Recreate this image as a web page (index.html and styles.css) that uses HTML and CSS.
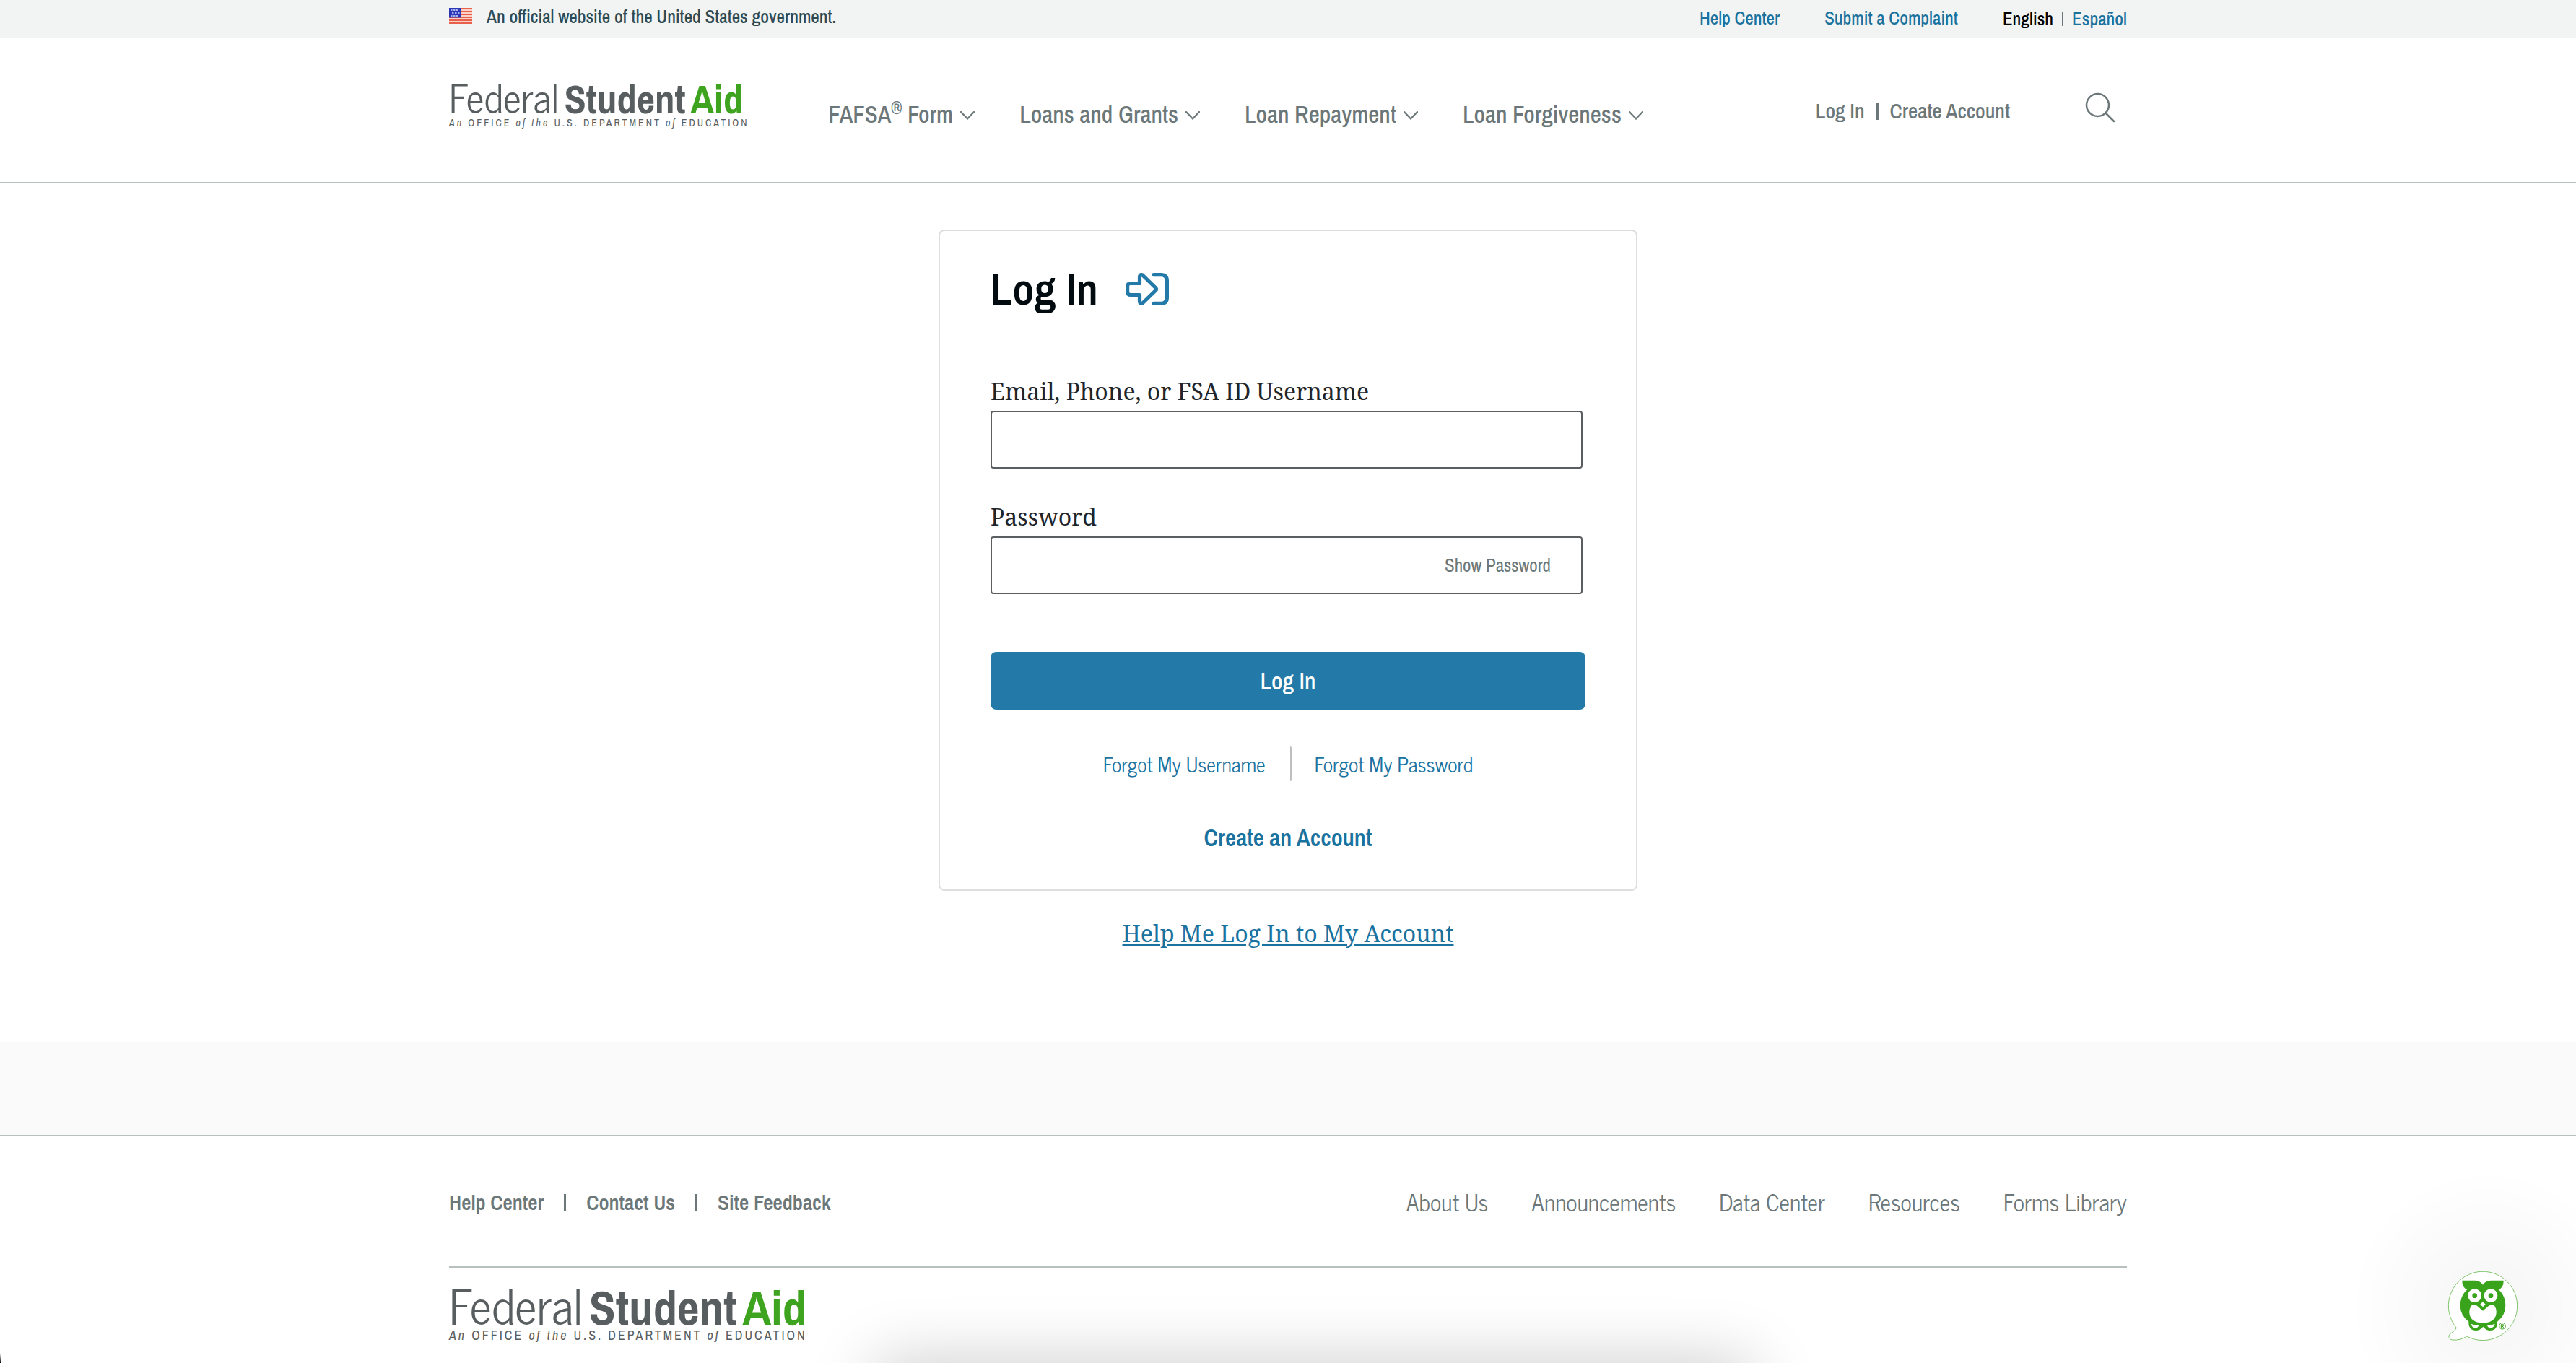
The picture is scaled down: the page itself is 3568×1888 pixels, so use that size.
FILE: index.html
```html
<!DOCTYPE html>
<html lang="en">
<head>
<meta charset="utf-8">
<meta name="viewport" content="width=device-width, initial-scale=1">
<title>Log In | Federal Student Aid</title>
<link rel="stylesheet" href="styles.css">
</head>
<body>
<svg class="sprite" aria-hidden="true">
  <symbol id="chevron" viewBox="0 0 20 12"><path d="M1 1 L10 10.500 L19 1" fill="none" stroke="currentColor" stroke-width="2.200" stroke-linecap="round"/></symbol>
</svg>

<div class="topbar">
  <div class="container topbar-row">
    <div class="official">
      <svg class="flag" viewBox="0 0 32 22" aria-hidden="true">
        <rect width="32" height="22" fill="#fbd0c6"/>
        <path d="M0 1H32M0 5H32M0 9H32M0 13H32M0 17H32M0 21H32" stroke="#e9604a" stroke-width="2"/>
        <rect width="16" height="13.500" fill="#2a38b8"/>
        <path d="M2 3H14M4 7H15M2 11H14" stroke="#a9b2ee" stroke-width="2" stroke-dasharray="2.500 1.500"/>
      </svg>
      <span>An official website of the United States government.</span>
    </div>
    <nav class="utility" aria-label="Utility">
      <a href="#">Help Center</a>
      <a href="#">Submit a Complaint</a>
      <div class="language"><span class="current">English</span><i class="bar"></i><a href="#">Español</a></div>
    </nav>
  </div>
</div>

<header class="header">
  <div class="container header-row">
    <a class="logo" href="#">
      <span class="wordmark"><span class="light">Federal</span><b>Student</b><b class="aid">Aid</b></span>
      <span class="tagline"><em>An</em> OFFICE <em>of the</em> U.S. DEPARTMENT <em>of</em> EDUCATION</span>
    </a>
    <nav class="main-nav" aria-label="Main">
      <button type="button"><span>FAFSA<sup>®</sup> Form</span><svg class="chevron"><use href="#chevron"/></svg></button>
      <button type="button"><span>Loans and Grants</span><svg class="chevron"><use href="#chevron"/></svg></button>
      <button type="button"><span>Loan Repayment</span><svg class="chevron"><use href="#chevron"/></svg></button>
      <button type="button"><span>Loan Forgiveness</span><svg class="chevron"><use href="#chevron"/></svg></button>
    </nav>
    <div class="account"><a href="#">Log In</a><i class="bar"></i><a href="#">Create Account</a></div>
    <button type="button" class="search" aria-label="Search">
      <svg viewBox="0 0 42 42" aria-hidden="true"><g fill="none" stroke="#6b7778" stroke-width="2.500" stroke-linecap="round"><circle cx="17.500" cy="17.500" r="15.500"/><path d="M28.500 28.500L40 40"/></g></svg>
    </button>
  </div>
</header>

<main class="main">
  <form class="card">
    <h1>Log In
      <svg class="login-icon" viewBox="0 0 60 45" aria-hidden="true"><g fill="none" stroke="#237aa8" stroke-width="5.200" stroke-linejoin="round"><path d="M19.500 14.500H7Q2.600 14.500 2.600 18.500V26.500Q2.600 30.500 7 30.500H19.500V40Q20 43.500 23.500 42L41.500 24.500Q43.500 22.500 41.500 20.500L23.500 3Q20 1.500 19.500 5Z"/><path d="M39 2.600H49Q57.400 2.600 57.400 11V34Q57.400 42.400 49 42.400H39" stroke-linecap="round"/></g></svg>
    </h1>
    <label for="username">Email, Phone, or FSA ID Username</label>
    <input id="username" type="text">
    <label for="password">Password</label>
    <div class="password-box">
      <input id="password" type="password">
      <button type="button">Show Password</button>
    </div>
    <button type="submit" class="submit">Log In</button>
    <div class="forgot"><a href="#">Forgot My Username</a><i class="divider"></i><a href="#">Forgot My Password</a></div>
    <a class="create" href="#">Create an Account</a>
  </form>
  <a class="help" href="#">Help Me Log In to My Account</a>
</main>

<div class="band"></div>

<footer class="footer">
  <div class="container">
    <div class="footer-row">
      <nav class="footer-left" aria-label="Support"><a href="#">Help Center</a><i class="bar"></i><a href="#">Contact Us</a><i class="bar"></i><a href="#">Site Feedback</a></nav>
      <nav class="footer-right" aria-label="Site"><a href="#">About Us</a><a href="#">Announcements</a><a href="#">Data Center</a><a href="#">Resources</a><a href="#">Forms Library</a></nav>
    </div>
    <a class="logo logo-large" href="#">
      <span class="wordmark"><span class="light">Federal</span><b>Student</b><b class="aid">Aid</b></span>
      <span class="tagline"><em>An</em> OFFICE <em>of the</em> U.S. DEPARTMENT <em>of</em> EDUCATION</span>
    </a>
  </div>
</footer>

<div class="overlays">
  <div class="bottom-shadow"></div>
  <div class="corner"></div>
  <div class="glow"></div>
  <button type="button" class="chat" aria-label="Ask Aidan">
    <svg viewBox="150 118 300 300" aria-hidden="true">
      <path d="M187 359A143 143 0 1 1 230 394Q205 412 170 409Q153 405 156 391Q160 382 171 377Q184 369 187 359Z" fill="#fff" stroke="#7fc46b" stroke-width="3"/>
      <path d="M211 162H264Q287 163 297 180Q307 163 330 162H383Q384 193 362 199Q391 226 391 266Q391 307 357 333Q359 359 340 368Q315 376 298 354Q280 376 255 368Q236 359 238 333Q203 307 203 266Q203 226 232 199Q210 193 211 162Z" fill="#3aa31c"/>
      <circle cx="263" cy="225" r="28" fill="#fff"/><circle cx="330" cy="225" r="28" fill="#fff"/>
      <circle cx="263" cy="225" r="10" fill="#3aa31c"/><circle cx="330" cy="225" r="10" fill="#3aa31c"/>
      <path d="M297 250L308 261L297 272L286 261Z" fill="#fff"/>
      <path d="M251 265Q262 263 271 266L297 288L323 266Q332 263 344 265Q354 278 353 297Q350 335 297 339Q244 335 241 297Q240 278 251 265ZM248 342Q264 349 280 350Q276 361 262 359Q250 355 248 342ZM347 342Q331 349 315 350Q319 361 333 359Q345 355 347 342Z" fill="#fff"/>
      <g fill="none" stroke="#3aa31c" stroke-width="3"><circle cx="378" cy="351" r="13"/><path d="M373 359V344H379Q384 345 384 348Q384 352 378 352H373M378 352L384 359"/></g>
    </svg>
  </button>
</div>
</body>
</html>
```
FILE: styles.css
```css
* { box-sizing: border-box; }

:root {
  --narrow: "Archivo Narrow", "Roboto Condensed", "Liberation Sans Narrow", "Liberation Sans", sans-serif;
  --light: "News Cycle", "Archivo Narrow", "Liberation Sans", sans-serif;
  --serif: "Noto Serif", "Liberation Serif", serif;
  --blue: #1a729f;
  --gray: #6b7778;
  --line: #b9c1c0;
}

body {
  margin: 0;
  background: #fff;
  color: #212529;
  font-family: var(--narrow);
  font-size: 25px;
}

a { color: var(--blue); text-decoration: none; }
button { padding: 0; border: 0; background: none; font-family: inherit; cursor: pointer; }
svg { display: block; }
.sprite { position: absolute; width: 0; height: 0; }

.container { width: calc(100% - 48px); max-width: 2324px; margin: 0 auto; }
.bar { width: 3px; height: 24px; background: var(--gray); }

/* Government banner */
.topbar { background: #f1f4f3; }
.topbar-row { display: flex; justify-content: space-between; height: 52px; font-weight: 500; }
.official { display: flex; gap: 20px; color: #2d4a54; line-height: 46px; }
.flag { width: 32px; height: 22px; margin-top: 11px; }
.utility { display: flex; gap: 62px; line-height: 50px; }
.language { display: flex; align-items: center; gap: 12px; }
.language .bar { width: 2px; height: 20px; }
.current { color: #000; }

/* Header */
.header { border-bottom: 2px solid var(--line); }
.header-row { display: flex; align-items: flex-start; height: 200px; }
.logo { display: inline-block; color: #585e60; }
.header .logo { margin-top: 60px; }
.wordmark { display: flex; align-items: baseline; gap: 7px; height: 50px; font-size: 55px; line-height: 50px; }
.light { font-family: var(--light); line-height: 0; }
.aid { color: #3ea31e; }
.tagline { display: block; font-size: 14px; line-height: 16px; letter-spacing: 3px; white-space: nowrap; }
.main-nav { display: flex; gap: 62px; margin-left: 110px; padding-top: 84px; }
.main-nav button { display: flex; align-items: center; gap: 10px; color: var(--gray); font-size: 33px; font-weight: 500; line-height: 44px; white-space: nowrap; }
.main-nav sup { font-size: 25px; line-height: 0; vertical-align: 12px; }
.chevron { width: 20px; height: 12px; margin-top: 4px; }
.account { display: flex; align-items: center; gap: 16px; margin-left: auto; padding-top: 80px; font-size: 29px; font-weight: 500; line-height: 44px; }
.account a { color: var(--gray); }
.search { margin: 76px 16px 0 104px; }
.search svg { width: 42px; height: 42px; }

/* Log in card */
.main { display: flex; flex-direction: column; align-items: center; padding: 64px 24px 129px; }
.card {
  display: flex;
  flex-direction: column;
  width: 100%;
  max-width: 968px;
  padding: 40px 70px 52px;
  border: 2px solid #dedede;
  border-radius: 8px;
}
h1 { display: flex; align-items: center; gap: 38px; margin: 0 0 80px; color: #020b0f; font-size: 62px; font-weight: 600; line-height: 80px; }
.login-icon { width: 60px; height: 45px; }
label { margin-bottom: 5px; font-family: var(--serif); font-size: 32px; line-height: 44px; }
input { width: 100%; height: 80px; padding: 0 20px; border: 2px solid #5a5e61; border-radius: 4px; background: #fff; font-family: var(--serif); font-size: 32px; }
.card > input { width: calc(100% - 4px); margin-bottom: 45px; }
.password-box { position: relative; width: calc(100% - 4px); }
.password-box button { position: absolute; top: 0; right: 44px; height: 80px; color: var(--gray); font-size: 25px; }
.submit { height: 80px; margin-top: 80px; border-radius: 8px; background: #237aa8; color: #fff; font-size: 33px; font-weight: 500; }
.forgot { display: flex; justify-content: center; align-items: center; gap: 32px; height: 48px; margin-top: 51px; font-family: var(--light); font-size: 28px; }
.divider { width: 4px; height: 48px; border-right: 2px solid #bfbfbf; border-radius: 4px; }
.create { align-self: center; margin-top: 58px; font-size: 33px; font-weight: 600; line-height: 40px; }
.help { margin-top: 37px; font-family: var(--serif); font-size: 32px; line-height: 44px; text-decoration: underline; text-decoration-thickness: 3px; }

.band { height: 128px; background: #fafafa; }

/* Footer */
.footer { border-top: 2px solid var(--line); }
.footer-row { display: flex; justify-content: space-between; padding: 72px 0 68px; border-bottom: 2px solid var(--line); line-height: 40px; }
.footer-row a { color: var(--gray); }
.footer-left { display: flex; align-items: center; gap: 28px; font-size: 29px; font-weight: 600; }
.footer-right { display: flex; gap: 60px; font-family: var(--light); font-size: 32px; line-height: 36px; }
.logo-large { margin-top: 24px; }
.logo-large .wordmark { gap: 8px; height: 62px; font-size: 67px; line-height: 62px; }
.logo-large .tagline { font-size: 18px; }

/* Floating elements over the page */
.overlays { position: fixed; inset: 0; overflow: hidden; pointer-events: none; }
.bottom-shadow { position: absolute; top: 100%; left: 34%; right: 32%; height: 80px; box-shadow: 0 0 90px rgba(0, 0, 0, 0.220); }
.corner { position: absolute; left: 0; bottom: 0; width: 2px; height: 12px; background: linear-gradient(#ddd, #000); }
.glow { position: absolute; right: -67px; bottom: -112px; width: 380px; height: 380px; background: radial-gradient(closest-side, rgba(0, 0, 0, 0.040), rgba(0, 0, 0, 0)); }
.chat { position: absolute; right: 78px; bottom: 29px; pointer-events: auto; }
.chat svg { width: 100px; height: 100px; }
```
